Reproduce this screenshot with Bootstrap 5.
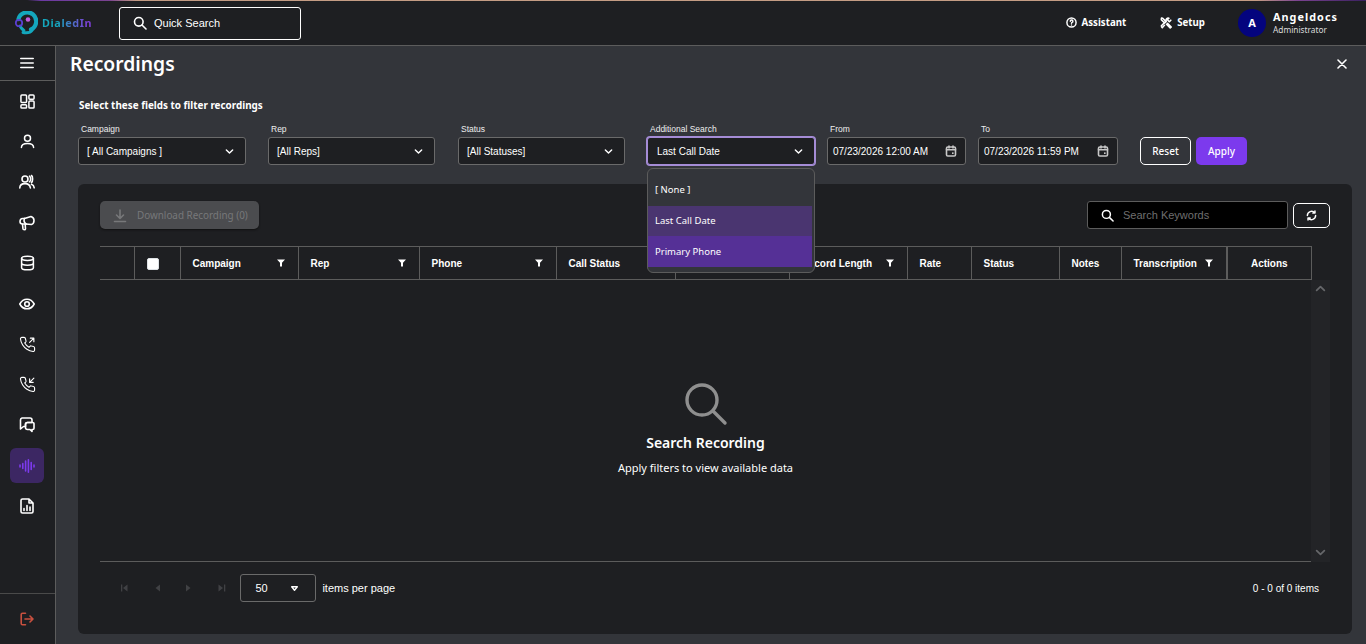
<!DOCTYPE html>
<html>
<head>
    <meta charset="UTF-8">
    <title>Recordings</title>
    <link href="https://cdn.jsdelivr.net/npm/bootstrap@5.3.0/dist/css/bootstrap.min.css" rel="stylesheet">
    <style>
        html, body { height: 100%; }
        body {
            background: #33353a;
            color: #fff;
            font-family: "Noto Sans", sans-serif;
            overflow: hidden;
        }
        svg { display: block; flex: none; fill: none; stroke: currentColor; stroke-width: 1.6; stroke-linecap: round; stroke-linejoin: round; }
        .arial { font-family: "Liberation Sans", Arial, sans-serif; }

        .top-strip { height: 1px; background: linear-gradient(90deg, #1e1f22 0, #1e1f22 2%, #6b3aa3 3%, #7a4390 8%, #c49c84 10%, #c49c84 92%, #7a4390 95%, #3a2060 100%); }
        .top-bar { height: 45px; background: #1e1f22; border-bottom: 1px solid #5c5c5c; }
        .logo-box { width: 119px; padding-left: 14px; }
        .logo-text { font-size: 10.8px; font-weight: 700; letter-spacing: .6px; background: linear-gradient(90deg, #14a7bd 30%, #7d3fd6 90%); -webkit-background-clip: text; background-clip: text; color: transparent; }
        .quick-search { width: 182px; height: 33px; border: 1px solid #fff; border-radius: 3px; padding-left: 13px; gap: 7px; font-size: 11px; }
        .top-link { font-size: 9.7px; font-weight: 700; gap: 5px; }
        .top-gap { margin-right: 34px; }
        .user-box { margin: 0 28px 0 33px; }
        .user-dot { width: 28px; height: 28px; border-radius: 50%; background: #04047e; font-size: 11px; font-weight: 700; margin-right: 7px; }
        .user-name { font-size: 10.8px; font-weight: 700; letter-spacing: 1.05px; line-height: 14px; }
        .user-role { font-size: 8.3px; line-height: 12px; color: #dcdcdc; }

        .side-bar { width: 56px; background: #1e1f22; border-right: 1px solid #5c5c5c; padding-right: 1px; }
        .side-menu { height: 35px; border-bottom: 1px solid #5c5c5c; margin-right: -1px; padding-right: 1px; }
        .side-item { height: 40.5px; }
        .side-item.is-on > span { width: 34px; height: 35px; border-radius: 6px; background: #3c2763; color: #7c3aed; }
        .side-foot { height: 51px; border-top: 1px solid #4a4a4a; color: #c8503f; margin-right: -1px; padding-right: 1px; }

        .page-head { height: 36px; padding: 0 19px 0 14px; }
        .page-head h1 { font-size: 19.3px; font-weight: 600; margin: 0; }
        .flt-title { height: 15px; margin: 16px 0 10px 23px; font-size: 9.9px; font-weight: 700; line-height: 15px; }
        .flt-row { padding-left: 22px; height: 42px; margin-bottom: 19px; }
        .flt-label { display: block; height: 12px; margin: 0 0 2px 3px; font-size: 8.5px; line-height: 12px; color: #eee; }
        .pick-box { height: 28px; background: #1e1f22; border: 1px solid #6a6a6a; border-radius: 3px; padding: 0 11px 0 8px; font-size: 10px; }
        .pick-on { border-color: #a58cd6; box-shadow: 0 0 0 1px #a58cd6; padding-left: 9px; }
        .w-a { width: 168px; margin-right: 22px; }
        .w-b { width: 167px; margin-right: 23px; }
        .w-s { width: 167px; margin-right: 22px; }
        .w-c { width: 139px; margin-right: 12px; }
        .w-d { width: 140px; margin-right: 22px; }
        .w-a-last { width: 168px; margin-right: 12px; }
        .date-box { padding: 0 8px 0 5px; }
        .date-box svg { color: #c8c8c8; }
        .act-btn { width: 51px; height: 28px; padding: 0; margin-top: 14px; border-radius: 5px; font-family: "Noto Sans", sans-serif; font-size: 10px; font-weight: 500; color: #fff; }
        .act-reset { border: 1px solid #fff; background: transparent; margin-right: 5px; }
        .act-apply { border: 0; background: #7c3aed; }
        .act-btn:hover { color: #fff; }

        .add-menu { top: 45px; left: 0; width: 168px; min-width: 0; height: 105px; padding: 5px 2px 0 0; background: #33353a; border: 1px solid #5c5c5c; border-radius: 6px; font-family: "Noto Sans", sans-serif; }
        .add-menu .dropdown-item { font-size: 9.5px; color: #fff; height: 32px; line-height: 32px; padding: 0 7px; }
        .add-menu .item-hover { background: #4a3570; height: 30px; line-height: 30px; }
        .add-menu .item-sel { background: #553096; height: 31px; line-height: 31px; }

        .data-card { height: 450px; margin: 0 14px 10px 22px; background: #1e1f22; border-radius: 6px; padding: 17px 22px 0; }
        .tool-row { height: 28px; margin-bottom: 17px; }
        .dl-btn { width: 159px; height: 28px; background: #4b4c4f; border: 0; border-radius: 5px; color: #77787a; font-size: 9.9px; padding: 1px 0 0 13px; gap: 10px; box-shadow: 0 1px 2px #111; }
        .kw-box { width: 201px; height: 28px; background: #000; border: 1px solid #5c5c5c; border-radius: 3px; padding: 1px 0 0 13px; gap: 9px; font-size: 11px; color: #6f6f6f; margin-right: 5px; }
        .kw-box svg { color: #fff; }
        .reload-btn { width: 37px; height: 25px; border: 1px solid #fff; border-radius: 5px; }

        .head-table { table-layout: fixed; width: 1211px; height: 34px; --bs-table-bg: transparent; --bs-table-color: #fff; margin: 0; font-family: "Liberation Sans", Arial, sans-serif; }
        .head-table th { padding: 1px 12px 0; height: 32px; font-size: 10px; font-weight: 700; vertical-align: middle; border-width: 1px 0 1px 1px; border-style: solid; border-color: #5c5c5c; background: transparent; color: #fff; }
        .head-table th:first-child { border-left: 0; }
        .head-table th:last-child { border-right: 1px solid #5c5c5c; border-left-width: 2px; }
        .head-table .form-check-input { width: 12px; height: 12px; margin: 0; background-color: #fff; border-radius: 2px; display: block; }
        .fn-icon { fill: #fff; stroke: none; margin: -2px 0 0 0; }

        .body-wrap { height: 282px; }
        .body-area { width: 1211px; border-bottom: 1px solid #5c5c5c; padding-top: 18px; }
        .scroll-col { width: 19px; background: #232427; color: #66676a; padding: 3px 0 4px; }
        .empty-ico { color: #8f8f8f; stroke-width: 3.4; margin-bottom: 7px; }
        .empty-title { font-size: 14px; font-weight: 600; line-height: 20px; margin-bottom: 5px; }
        .empty-sub { font-size: 11px; line-height: 20px; }

        .pager-row { width: 1219px; padding-top: 12px; }
        .pg-wrap { padding-left: 8px; }
        .pg-ico { color: #404144; fill: currentColor; stroke: none; margin: 0 11.3px; }
        .per-box { width: 76px; height: 28px; border: 1px solid #6a6a6a; border-radius: 3px; font-size: 11px; padding: 0 17px 0 14px; margin-left: 2px; }
        .per-label { font-size: 11px; margin-left: 6px; }
        .count-text { font-size: 10px; }
    </style>
</head>
<body class="d-flex flex-column">
    <svg class="d-none">
        <symbol id="i-chev" viewBox="0 0 10 10"><path d="M1.5 3.3 5 6.7l3.5-3.4"/></symbol>
        <symbol id="i-cal" viewBox="0 0 12 12"><rect x="1.5" y="2" width="9" height="9" rx="1.3"/><path d="M1.5 4.8h9M4 1v2M8 1v2"/><rect x="7" y="7.4" width="1.6" height="1.6" fill="currentColor" stroke="none"/></symbol>
        <symbol id="i-phone" viewBox="0 0 24 24"><path d="M22 16.9v3a2 2 0 0 1-2.2 2 19.8 19.8 0 0 1-8.6-3.1 19.5 19.5 0 0 1-6-6 19.8 19.8 0 0 1-3.1-8.6A2 2 0 0 1 4.1 2h3a2 2 0 0 1 2 1.7c.1 1 .4 1.9.7 2.8a2 2 0 0 1-.4 2.1L8.1 9.9a16 16 0 0 0 6 6l1.3-1.3a2 2 0 0 1 2.1-.4c.9.3 1.8.6 2.8.7a2 2 0 0 1 1.7 2z"/></symbol>
        <symbol id="i-fn" viewBox="0 0 10 10"><path d="M1 1.500h8L6 4.800v3.700H4V4.800z"/></symbol>
        <symbol id="i-pgl" viewBox="0 0 10 10"><path d="M8 1.5v7L3.5 5z"/></symbol>
        <symbol id="i-pgr" viewBox="0 0 10 10"><path d="M2 1.5v7L6.5 5z"/></symbol>
        <symbol id="i-pgf" viewBox="0 0 10 10"><path d="M8.500 1.500v7L4 5zM2 1.500h1.300v7H2z"/></symbol>
        <symbol id="i-pge" viewBox="0 0 10 10"><path d="M1.500 1.500v7L6 5zM7 1.500h1.300v7H7z"/></symbol>
    </svg>

    <div class="top-strip"></div>
    <header class="top-bar d-flex align-items-center">
        <div class="logo-box d-flex align-items-center">
            <svg width="24" height="24" viewBox="0 0 24 24">
                <path d="M4.500 8A9 9 0 1 1 17 18.500" stroke="#14a7bd" stroke-width="4.200"/>
                <path d="M9 21.500c3.500.5 7.500.3 9-2" stroke="#14a7bd" stroke-width="2.800"/>
                <path d="M6 15c1 2 2.500 3.500 4 4.500" stroke="#14a7bd" stroke-width="2.800"/>
                <circle cx="5" cy="12" r="3.200" stroke="#5b3fd0" stroke-width="1.800"/>
                <circle cx="14" cy="8.500" r="2.300" fill="#c45be0" stroke="none"/>
            </svg>
            <span class="logo-text ms-1">DialedIn</span>
        </div>
        <div class="quick-search arial d-flex align-items-center">
            <svg width="14" height="14" viewBox="0 0 14 14" stroke-width="1.300"><circle cx="5.800" cy="5.800" r="4.300"/><path d="m9 9 4 4"/></svg>
            <span>Quick Search</span>
        </div>
        <div class="d-flex align-items-center ms-auto">
            <div class="top-link top-gap d-flex align-items-center">
                <svg width="11" height="11" viewBox="0 0 12 12" stroke-width="1"><circle cx="6" cy="6" r="5"/><path d="M4.700 4.600a1.400 1.400 0 1 1 2 1.300c-.5.300-.7.500-.7 1"/><path d="M6 8.600v.1"/></svg>
                <span>Assistant</span>
            </div>
            <div class="top-link d-flex align-items-center">
                <svg width="12" height="12" viewBox="0 0 12 12" stroke-width="1"><path d="m1.500 1 1.200.3L6 4.600 4.600 6 1.300 2.700zM4.500 8.300 2.300 10.500M1.500 9.800l.8.800.8-.8"/><path d="M10.800 3.200 9.300 4.700 7.400 2.800l1.500-1.500a2.200 2.200 0 0 0-2.800 2.800L1.400 8.800M6.500 7.300l3.700 3.700 1-1-3.700-3.700"/></svg>
                <span>Setup</span>
            </div>
            <div class="user-box d-flex align-items-center">
                <div class="user-dot d-flex align-items-center justify-content-center">A</div>
                <div>
                    <div class="user-name">Angeldocs</div>
                    <div class="user-role">Administrator</div>
                </div>
            </div>
        </div>
    </header>

    <div class="d-flex flex-grow-1">
        <aside class="side-bar d-flex flex-column">
            <div class="side-menu d-flex align-items-center justify-content-center">
                <svg width="14" height="12" viewBox="0 0 14 12"><path d="M.8 1.500h12.400M.8 6h12.400M.8 10.500h12.400"/></svg>
            </div>
            <nav class="flex-grow-1">
                <div class="side-item d-flex align-items-center justify-content-center">
                    <svg width="15" height="15" viewBox="0 0 16 16" stroke-width="1.300"><rect x="1" y="1" width="6" height="8" rx="1"/><rect x="9.500" y="1" width="5.500" height="4.500" rx="1"/><rect x="1" y="11.500" width="6" height="3.500" rx="1"/><rect x="9.500" y="7.500" width="5.500" height="7.500" rx="1"/></svg>
                </div>
                <div class="side-item d-flex align-items-center justify-content-center">
                    <svg width="15" height="15" viewBox="0 0 16 16" stroke-width="1.200"><circle cx="8" cy="4.500" r="3.200"/><path d="M1.500 14.500c0-3 2.500-4.500 6.500-4.500s6.500 1.500 6.500 4.500"/></svg>
                </div>
                <div class="side-item d-flex align-items-center justify-content-center">
                    <svg width="16" height="16" viewBox="0 0 16 16" stroke-width="1.100"><circle cx="6" cy="5" r="3"/><path d="M.8 14c0-3 2.200-4.400 5.200-4.400s5 1.400 5.400 4.400M10.500 2.200c1.500.6 1.500 4.900 0 5.600M12.500 1.500c1.500 1 1.500 6 0 7M12.500 10.300c1.500.5 2.500 1.800 2.700 3.500"/></svg>
                </div>
                <div class="side-item d-flex align-items-center justify-content-center">
                    <svg width="16" height="16" viewBox="0 0 16 16" stroke-width="1.200"><path d="M5.500 3.500 12 1.500c1.800.5 3 2.300 3 4s-1 3.500-2.500 4L7 9"/><path d="M5.500 3.500H3.700C1.800 3.500 1 5 1 6.500S2 9 3.500 9H7"/><path d="M5.500 3.500C4.800 5 5.200 7.500 7 9"/><path d="M3.500 9.200 4 14c.1 1 2.500 1 2.500 0l-.3-4.800"/></svg>
                </div>
                <div class="side-item d-flex align-items-center justify-content-center">
                    <svg width="15" height="16" viewBox="0 0 16 16" stroke-width="1.200"><ellipse cx="8" cy="3" rx="6.300" ry="2.300"/><path d="M1.700 3v10c0 1.300 2.800 2.300 6.300 2.300s6.300-1 6.300-2.300V3M1.700 8c0 1.300 2.800 2.300 6.300 2.300S14.300 9.300 14.300 8"/></svg>
                </div>
                <div class="side-item d-flex align-items-center justify-content-center">
                    <svg width="16" height="16" viewBox="0 0 16 16" stroke-width="1.200"><path d="M.8 8C2.500 4.800 5 3.200 8 3.200s5.500 1.600 7.200 4.800C13.500 11.200 11 12.800 8 12.800S2.500 11.200.8 8z"/><circle cx="8" cy="8" r="2.300"/></svg>
                </div>
                <div class="side-item d-flex align-items-center justify-content-center">
                    <svg width="17" height="17" viewBox="0 0 24 24" stroke-width="1.800"><use href="#i-phone"/><path d="m15 9 6-6M16 3h5v5"/></svg>
                </div>
                <div class="side-item d-flex align-items-center justify-content-center">
                    <svg width="17" height="17" viewBox="0 0 24 24" stroke-width="1.800"><use href="#i-phone"/><path d="m21 3-6 6M15 4v5h5"/></svg>
                </div>
                <div class="side-item d-flex align-items-center justify-content-center">
                    <svg width="16" height="16" viewBox="0 0 16 16" stroke-width="1.200"><path d="M3 1h8a2 2 0 0 1 2 2v2.500H8.500a2 2 0 0 0-2 2v2H4.500L1.500 12V3a2 2 0 0 1 1.500-2z"/><path d="M8.500 5.500h5.200a1.300 1.300 0 0 1 1.300 1.300v4.400a1.300 1.300 0 0 1-1.300 1.300h-.7v2l-2-2H8.500a2 2 0 0 1-2-2V7.500a2 2 0 0 1 2-2z"/></svg>
                </div>
                <div class="side-item is-on d-flex align-items-center justify-content-center">
                    <span class="d-flex align-items-center justify-content-center">
                        <svg width="16" height="14" viewBox="0 0 16 14" stroke-width="1.200"><path d="M1 6v2M3.800 4.500v5M6.600 2v10M9.400 .8v12.400M12.200 3.500v7M15 6v2"/></svg>
                    </span>
                </div>
                <div class="side-item d-flex align-items-center justify-content-center">
                    <svg width="14" height="16" viewBox="0 0 14 16" stroke-width="1.200"><path d="M2.500 1H9l4 4v8.500a1.500 1.500 0 0 1-1.500 1.500h-9A1.500 1.500 0 0 1 1 13.500v-11A1.500 1.500 0 0 1 2.500 1zM9 1v4h4"/><path d="M4 12.500v-2M7 12.500v-5M10 12.500V9" stroke-width="1.600"/></svg>
                </div>
            </nav>
            <div class="side-foot d-flex align-items-center justify-content-center">
                <svg width="14" height="14" viewBox="0 0 14 14" stroke-width="1.300"><path d="M5.500 1.200H2.500A1.300 1.300 0 0 0 1.200 2.500v9a1.300 1.300 0 0 0 1.300 1.300h3M5 7h8M10 4l3 3-3 3"/></svg>
            </div>
        </aside>

        <main class="flex-grow-1">
            <div class="page-head d-flex align-items-center justify-content-between">
                <h1>Recordings</h1>
                <svg width="10" height="10" viewBox="0 0 10 10" stroke-width="1.500"><path d="m1 1 8 8M9 1 1 9"/></svg>
            </div>
            <div class="flt-title">Select these fields to filter recordings</div>

            <div class="flt-row d-flex arial">
                <div class="w-a">
                    <label class="flt-label">Campaign</label>
                    <div class="pick-box d-flex align-items-center justify-content-between"><span>[ All Campaigns ]</span><svg width="9" height="9" stroke-width="1.100"><use href="#i-chev"/></svg></div>
                </div>
                <div class="w-b">
                    <label class="flt-label">Rep</label>
                    <div class="pick-box d-flex align-items-center justify-content-between"><span>[All Reps]</span><svg width="9" height="9" stroke-width="1.100"><use href="#i-chev"/></svg></div>
                </div>
                <div class="w-s">
                    <label class="flt-label">Status</label>
                    <div class="pick-box d-flex align-items-center justify-content-between"><span>[All Statuses]</span><svg width="9" height="9" stroke-width="1.100"><use href="#i-chev"/></svg></div>
                </div>
                <div class="w-a-last position-relative">
                    <label class="flt-label">Additional Search</label>
                    <div class="pick-box pick-on d-flex align-items-center justify-content-between"><span>Last Call Date</span><svg width="9" height="9" stroke-width="1.100"><use href="#i-chev"/></svg></div>
                    <ul class="dropdown-menu show add-menu position-absolute">
                        <li><a class="dropdown-item" href="#">[ None ]</a></li>
                        <li><a class="dropdown-item item-hover" href="#">Last Call Date</a></li>
                        <li><a class="dropdown-item item-sel" href="#">Primary Phone</a></li>
                    </ul>
                </div>
                <div class="w-c">
                    <label class="flt-label">From</label>
                    <div class="pick-box date-box d-flex align-items-center justify-content-between"><span>07/23/2026 12:00 AM</span><svg width="12" height="12" stroke-width="1.100"><use href="#i-cal"/></svg></div>
                </div>
                <div class="w-d">
                    <label class="flt-label">To</label>
                    <div class="pick-box date-box d-flex align-items-center justify-content-between"><span>07/23/2026 11:59 PM</span><svg width="12" height="12" stroke-width="1.100"><use href="#i-cal"/></svg></div>
                </div>
                <button class="btn act-btn act-reset">Reset</button>
                <button class="btn act-btn act-apply">Apply</button>
            </div>

            <section class="data-card">
                <div class="tool-row d-flex align-items-center justify-content-between">
                    <button class="dl-btn d-flex align-items-center" disabled>
                        <svg width="14" height="14" viewBox="0 0 14 14" stroke-width="1.500"><path d="M7 1v8M3.500 6 7 9.500 10.500 6M1.500 12.500h11"/></svg>
                        <span>Download Recording (0)</span>
                    </button>
                    <div class="d-flex align-items-center">
                        <div class="kw-box arial d-flex align-items-center">
                            <svg width="13" height="13" viewBox="0 0 14 14" stroke-width="1.600"><circle cx="5.800" cy="5.800" r="4.300"/><path d="m9 9 4 4"/></svg>
                            <span>Search Keywords</span>
                        </div>
                        <div class="reload-btn d-flex align-items-center justify-content-center">
                            <svg width="11" height="11" viewBox="0 0 12 12" stroke-width="1"><path d="M1.500 6A4.500 4.500 0 0 1 9.500 3.200M10.500 6a4.500 4.500 0 0 1-8 2.800M9.800 1v2.400H7.400M2.200 11V8.600h2.400"/></svg>
                        </div>
                    </div>
                </div>

                <table class="table head-table">
                    <colgroup>
                        <col width="34"><col width="46"><col width="118"><col width="121"><col width="137"><col width="119"><col width="114"><col width="118"><col width="64"><col width="88"><col width="62"><col width="106"><col width="84">
                    </colgroup>
                    <thead>
                        <tr>
                            <th></th>
                            <th><input class="form-check-input" type="checkbox"></th>
                            <th><div class="d-flex align-items-center justify-content-between">Campaign<svg class="fn-icon" width="10" height="10"><use href="#i-fn"/></svg></div></th>
                            <th><div class="d-flex align-items-center justify-content-between">Rep<svg class="fn-icon" width="10" height="10"><use href="#i-fn"/></svg></div></th>
                            <th><div class="d-flex align-items-center justify-content-between">Phone<svg class="fn-icon" width="10" height="10"><use href="#i-fn"/></svg></div></th>
                            <th><div class="d-flex align-items-center justify-content-between">Call Status<svg class="fn-icon" width="10" height="10"><use href="#i-fn"/></svg></div></th>
                            <th></th>
                            <th><div class="d-flex align-items-center justify-content-between">Record Length<svg class="fn-icon" width="10" height="10"><use href="#i-fn"/></svg></div></th>
                            <th>Rate</th>
                            <th>Status</th>
                            <th>Notes</th>
                            <th><div class="d-flex align-items-center justify-content-between">Transcription<svg class="fn-icon" width="10" height="10"><use href="#i-fn"/></svg></div></th>
                            <th class="text-center">Actions</th>
                        </tr>
                    </thead>
                </table>

                <div class="body-wrap d-flex">
                    <div class="body-area d-flex flex-column align-items-center justify-content-center text-center">
                        <svg class="empty-ico" width="44" height="44" viewBox="0 0 44 44"><circle cx="18" cy="18" r="15"/><path d="m29 29 12 12"/></svg>
                        <div class="empty-title">Search Recording</div>
                        <div class="empty-sub">Apply filters to view available data</div>
                    </div>
                    <div class="scroll-col d-flex flex-column justify-content-between align-items-center">
                        <svg width="11" height="11" viewBox="0 0 10 10" stroke-width="1.800"><path d="M1.500 6.700 5 3.300l3.500 3.400"/></svg>
                        <svg width="11" height="11" viewBox="0 0 10 10" stroke-width="1.800"><use href="#i-chev"/></svg>
                    </div>
                </div>

                <div class="pager-row arial d-flex align-items-center justify-content-between">
                    <div class="pg-wrap d-flex align-items-center">
                        <svg class="pg-ico" width="10" height="10"><use href="#i-pgf"/></svg>
                        <svg class="pg-ico" width="10" height="10"><use href="#i-pgl"/></svg>
                        <svg class="pg-ico" width="10" height="10"><use href="#i-pgr"/></svg>
                        <svg class="pg-ico" width="10" height="10"><use href="#i-pge"/></svg>
                        <div class="per-box d-flex align-items-center justify-content-between"><span>50</span><svg width="7" height="7" viewBox="0 0 8 8" fill="#fff" stroke="none"><path d="M.8 2h6.400L4 6z"/></svg></div>
                        <span class="per-label">items per page</span>
                    </div>
                    <span class="count-text">0 - 0 of 0 items</span>
                </div>
            </section>
        </main>
    </div>
</body>
</html>
